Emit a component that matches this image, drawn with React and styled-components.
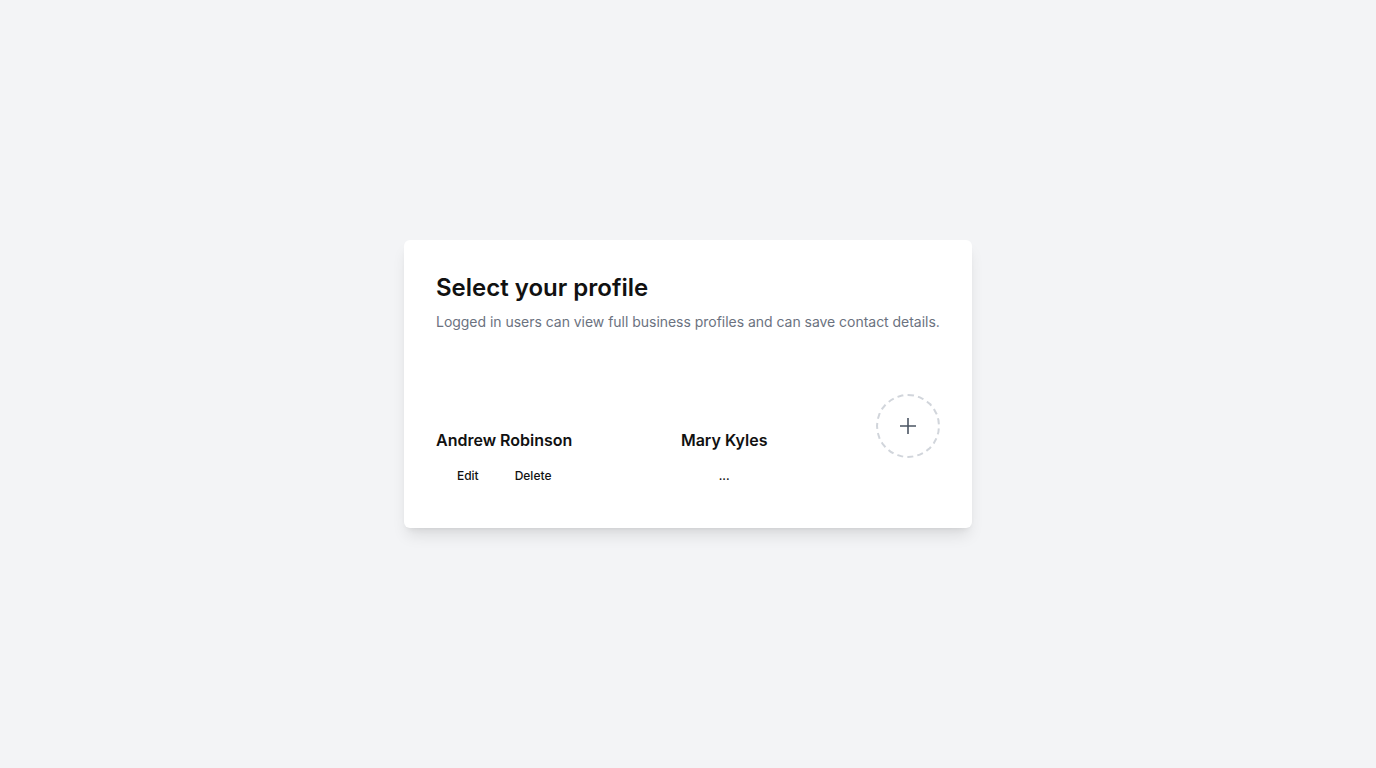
import React from 'react';
import styled, { createGlobalStyle } from 'styled-components';

const profiles = [
  { id: 1, name: 'Andrew Robinson', actions: ['Edit', 'Delete'] },
  { id: 2, name: 'Mary Kyles', actions: ['...'] },
];

const App = () => (
  <Page>
    <GlobalStyle />
    <Card>
      <Title>Select your profile</Title>
      <Subtitle>Logged in users can view full business profiles and can save contact details.</Subtitle>
      <Profiles>
        {profiles.map(p => (
          <Profile key={p.id}>
            <Name>{p.name}</Name>
            <Actions>
              {p.actions.map(a => (
                <ActionButton key={a}>{a}</ActionButton>
              ))}
            </Actions>
          </Profile>
        ))}
        <AddButton aria-label="Add profile">
          <svg width="20" height="20" viewBox="0 0 20 20" fill="none">
            <path d="M10 2v16M2 10h16" stroke="#4b5563" strokeWidth="1.6" />
          </svg>
        </AddButton>
      </Profiles>
    </Card>
  </Page>
);

export default App;

const GlobalStyle = createGlobalStyle`
  html, body {
    margin: 0;
    background: #f3f4f6;
    font-family: Inter, "Liberation Sans", sans-serif;
  }
`;

const Page = styled.div`
  min-height: 768px;
  display: flex;
  align-items: center;
  justify-content: center;
`;

const Card = styled.div`
  width: 568px;
  box-sizing: border-box;
  padding: 32px 32px 36px;
  background: #fff;
  border-radius: 6px;
  box-shadow: 0 10px 15px -3px rgba(0, 0, 0, 0.1), 0 4px 6px -4px rgba(0, 0, 0, 0.1);
`;

const Title = styled.h1`
  margin: 0;
  font-size: 24px;
  line-height: 32px;
  font-weight: 600;
  color: #111;
`;

const Subtitle = styled.p`
  margin: 8px 0 0;
  font-size: 14px;
  line-height: 20px;
  letter-spacing: -0.03px;
  color: #6b7280;
  white-space: nowrap;
`;

const Profiles = styled.div`
  margin-top: 62px;
  display: flex;
  justify-content: space-between;
  align-items: flex-start;
`;

const Profile = styled.div`
  padding-top: 36px;
  display: flex;
  flex-direction: column;
  align-items: center;
`;

const Name = styled.div`
  font-size: 16px;
  line-height: 20px;
  font-weight: 600;
  color: #111;
`;

const Actions = styled.div`
  margin-top: 10px;
  display: flex;
  gap: 4px;
`;

const ActionButton = styled.button`
  border: none;
  background: transparent;
  padding: 8px 16px;
  font-family: inherit;
  font-size: 12px;
  line-height: 16px;
  font-weight: 500;
  color: #111;
  cursor: pointer;
`;

const AddButton = styled.button`
  width: 64px;
  height: 64px;
  box-sizing: border-box;
  padding: 0;
  border: 2px dashed #d1d5db;
  border-radius: 50%;
  background: transparent;
  display: flex;
  align-items: center;
  justify-content: center;
  cursor: pointer;
`;
